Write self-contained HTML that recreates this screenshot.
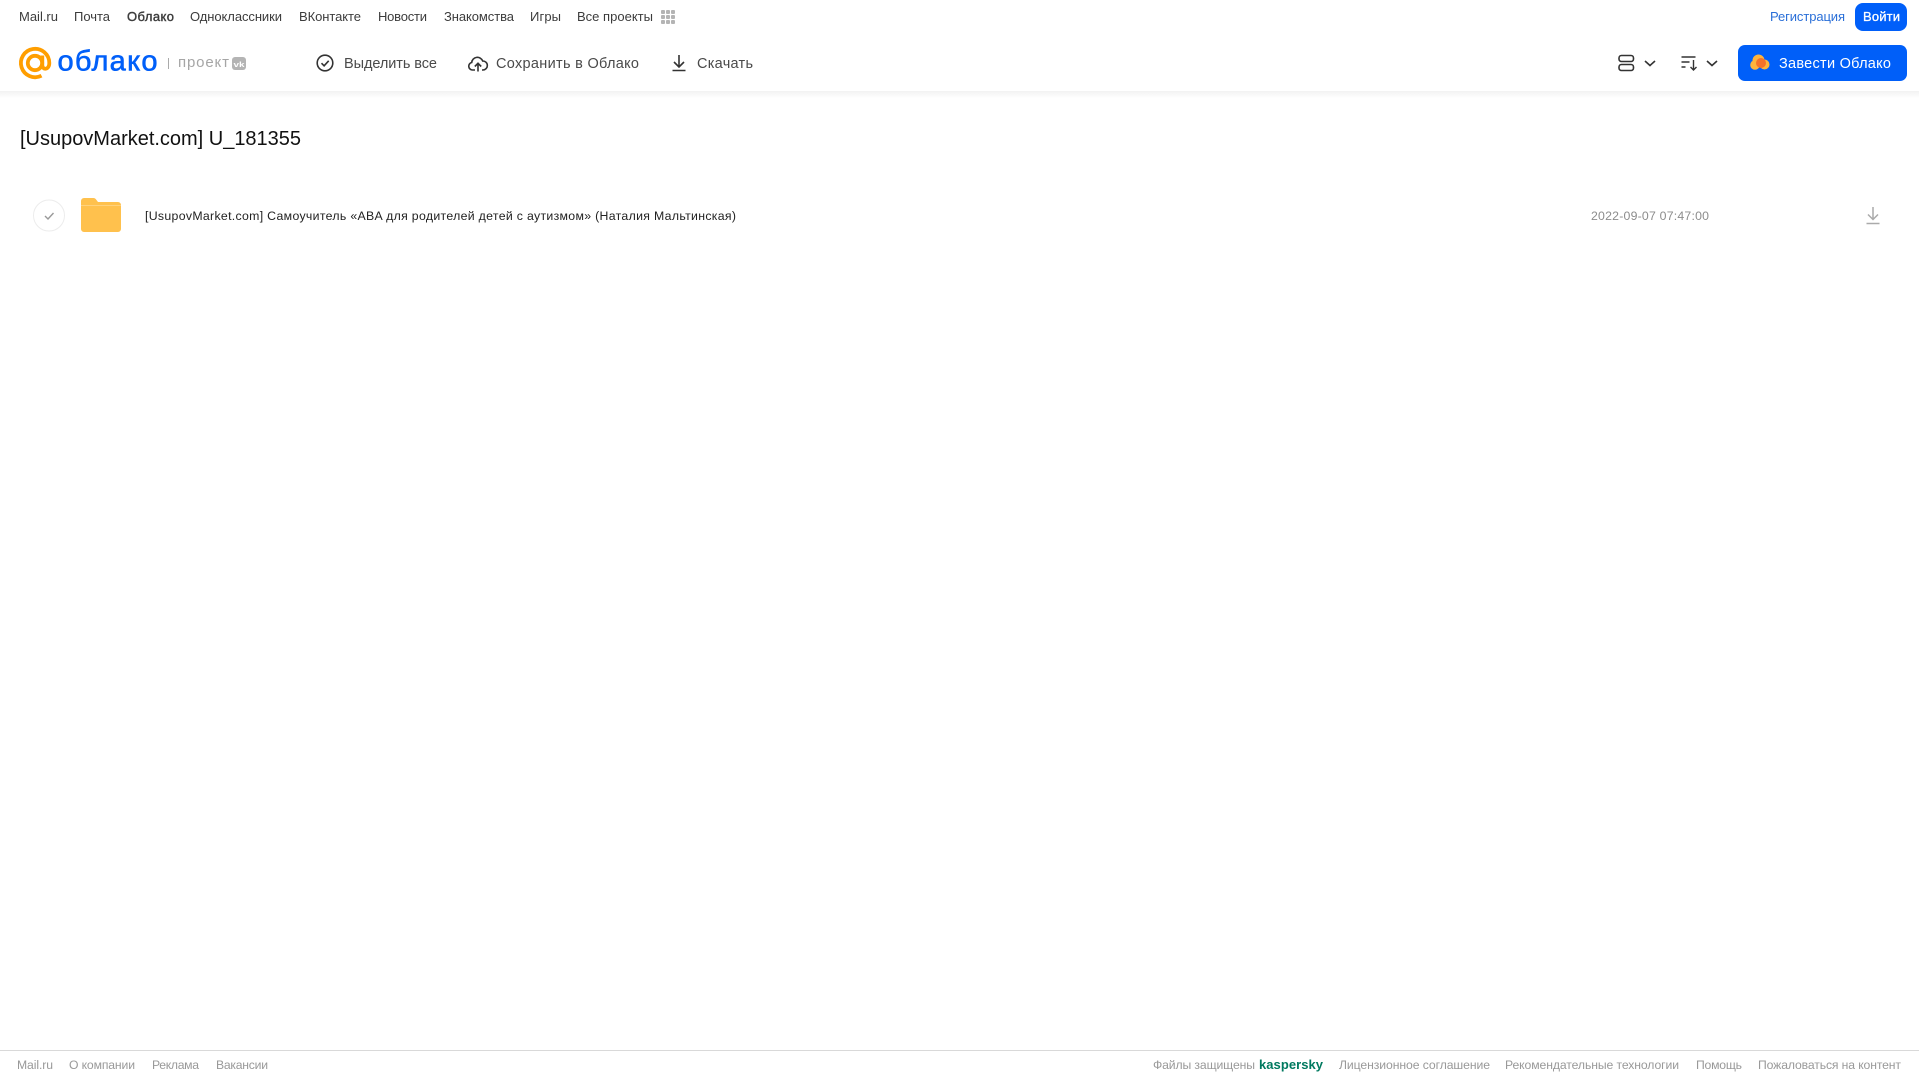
<!DOCTYPE html>
<html lang="ru"><head><meta charset="utf-8"><title>Облако</title>
<style>
html,body{margin:0;padding:0;width:1919px;height:1079px;overflow:hidden;background:#fff}
svg{position:absolute;left:0;top:0;display:block}
text{font-family:"Liberation Sans",sans-serif}
.h{font-size:13px;fill:#3c3c3c}
.t{font-size:14.5px;fill:#4a4a4a}
.f{font-size:12.2px;fill:#999}
</style></head><body>
<svg width="1919" height="1079" viewBox="0 0 1919 1079" xmlns="http://www.w3.org/2000/svg">
<defs><linearGradient id="sh" x1="0" y1="0" x2="0" y2="1"><stop offset="0" stop-color="#f2f2f2"/><stop offset="1" stop-color="#fff"/></linearGradient></defs>
<rect x="0" y="91" width="1919" height="7" fill="url(#sh)"/>

<text class="h" x="19" y="21" textLength="39" lengthAdjust="spacing">Mail.ru</text>
<text class="h" x="74" y="21" textLength="36" lengthAdjust="spacing">Почта</text>
<text class="h" x="127" y="21" textLength="47" lengthAdjust="spacing" stroke="#3c3c3c" stroke-width=".4">Облако</text>
<text class="h" x="190" y="21" textLength="92" lengthAdjust="spacing">Одноклассники</text>
<text class="h" x="299" y="21" textLength="62" lengthAdjust="spacing">ВКонтакте</text>
<text class="h" x="378" y="21" textLength="49" lengthAdjust="spacing">Новости</text>
<text class="h" x="444" y="21" textLength="70" lengthAdjust="spacing">Знакомства</text>
<text class="h" x="530" y="21" textLength="31" lengthAdjust="spacing">Игры</text>
<text class="h" x="577" y="21" textLength="76" lengthAdjust="spacing">Все проекты</text>
<g fill="#b4b4b4"><rect x="661" y="10" width="4" height="4" rx="1"/><rect x="666" y="10" width="4" height="4" rx="1"/><rect x="671" y="10" width="4" height="4" rx="1"/><rect x="661" y="15" width="4" height="4" rx="1"/><rect x="666" y="15" width="4" height="4" rx="1"/><rect x="671" y="15" width="4" height="4" rx="1"/><rect x="661" y="20" width="4" height="4" rx="1"/><rect x="666" y="20" width="4" height="4" rx="1"/><rect x="671" y="20" width="4" height="4" rx="1"/></g>

<g fill="none" stroke="#ff9e00" stroke-width="3.8"><circle cx="35" cy="63" r="7.2"/><path d="M42.300 55.500V65c0 5.500 7 5 7-2A14.200 14.200 0 1 0 41.500 75.700"/></g>
<text x="57.500" y="70.500" font-size="29" fill="#005ff9" stroke="#005ff9" stroke-width=".6" textLength="100" lengthAdjust="spacing">облако</text>
<rect x="168" y="58" width="1" height="11" fill="#aaa"/>
<text x="178" y="67" font-size="15" fill="#a6a6a6" textLength="51" lengthAdjust="spacing">проект</text>
<rect x="232" y="57" width="14" height="13" rx="3" fill="#b4b4b4"/>
<text x="233.500" y="67" font-size="7.500" font-weight="700" fill="#fff" textLength="11" lengthAdjust="spacingAndGlyphs">vk</text>

<g fill="none" stroke="#333" stroke-width="1.600"><circle cx="325" cy="63" r="7.800"/><path d="M321.500 63.200l2.600 2.600 4.600-5"/></g>
<text class="t" x="344" y="68" textLength="93" lengthAdjust="spacing">Выделить все</text>
<g fill="none" stroke="#333" stroke-width="1.600"><path d="M475 70h-2.500a3.800 3.800 0 0 1-.8-7.500 5.700 5.700 0 0 1 11-1.500A4.500 4.500 0 0 1 483 70h-1"/><path d="M478 71.500v-8M474.800 66.500l3.200-3.200 3.200 3.200"/></g>
<text class="t" x="496" y="68" textLength="143" lengthAdjust="spacing">Сохранить в Облако</text>
<g fill="none" stroke="#333" stroke-width="1.600"><path d="M679 55v11.500M674 62l5 5 5-5M672.500 70.500h13"/></g>
<text class="t" x="697" y="68" textLength="56" lengthAdjust="spacing">Скачать</text>

<text x="1770" y="21" font-size="13" fill="#2a6fd8" textLength="75" lengthAdjust="spacing">Регистрация</text>
<rect x="1855" y="3" width="52" height="28" rx="8" fill="#005ff9"/>
<text x="1863" y="21" font-size="13" fill="#fff" stroke="#fff" stroke-width=".3" textLength="37" lengthAdjust="spacing">Войти</text>

<g fill="none" stroke="#333" stroke-width="1.600"><rect x="1619" y="55.500" width="14.500" height="6" rx="2.500"/><rect x="1619" y="64.500" width="14.500" height="6" rx="2.500"/><path d="M1645 61l5 4.500 5-4.500M1707 61l5 4.500 5-4.500"/></g>
<g fill="none" stroke="#333" stroke-width="1.400"><path d="M1681.500 57h14M1681.500 62h8M1681.500 67h4M1693.500 60v10M1690.500 67l3 3 3-3"/></g>

<rect x="1738" y="45" width="169" height="36" rx="7" fill="#005ff9"/>
<circle cx="1758.500" cy="60.500" r="6" fill="#ffb43c"/>
<circle cx="1755" cy="65" r="4.800" fill="#ffb43c"/>
<circle cx="1764.500" cy="64.500" r="5" fill="#ffb43c"/>
<circle cx="1761" cy="63" r="5" fill="#f4722b"/>
<text x="1779" y="68" font-size="14.500" fill="#fff" textLength="112" lengthAdjust="spacing">Завести Облако</text>

<text x="20" y="145" font-size="20" fill="#111" textLength="281" lengthAdjust="spacing">[UsupovMarket.com] U_181355</text>

<circle cx="49" cy="215.500" r="15.500" fill="#fff" stroke="#ececec"/>
<path d="M45 216l3 3 5.500-6" fill="none" stroke="#999" stroke-width="1.400"/>
<path d="M81 201a3 3 0 0 1 3-3h9.500a3 3 0 0 1 2.200 1l2.300 3h20a3 3 0 0 1 3 3v24a3 3 0 0 1-3 3H84a3 3 0 0 1-3-3z" fill="#ffc14d"/>
<rect x="81" y="205" width="40" height="1" fill="#ffd27d"/>
<text x="145" y="220" font-size="12.300" fill="#222" textLength="591" lengthAdjust="spacing">[UsupovMarket.com] Самоучитель «ABA для родителей детей с аутизмом» (Наталия Мальтинская)</text>
<text x="1591" y="220" font-size="12.300" fill="#8c8c8c" textLength="118" lengthAdjust="spacing">2022-09-07 07:47:00</text>
<path d="M1873 207v12M1868 214.500l5 5 5-5M1866.500 223.500h13" fill="none" stroke="#aaa" stroke-width="1.500"/>

<rect x="0" y="1050" width="1919" height="1" fill="#d9d9d9"/>
<text class="f" x="17" y="1069" textLength="36" lengthAdjust="spacing">Mail.ru</text>
<text class="f" x="69" y="1069" textLength="66" lengthAdjust="spacing">О компании</text>
<text class="f" x="152" y="1069" textLength="47" lengthAdjust="spacing">Реклама</text>
<text class="f" x="216" y="1069" textLength="52" lengthAdjust="spacing">Вакансии</text>
<text class="f" x="1153" y="1069" textLength="102" lengthAdjust="spacing">Файлы защищены</text>
<text x="1259" y="1069" font-size="13" font-weight="700" fill="#00795f" textLength="64" lengthAdjust="spacing">kaspersky</text>
<text class="f" x="1339" y="1069" textLength="151" lengthAdjust="spacing">Лицензионное соглашение</text>
<text class="f" x="1505" y="1069" textLength="174" lengthAdjust="spacing">Рекомендательные технологии</text>
<text class="f" x="1696" y="1069" textLength="46" lengthAdjust="spacing">Помощь</text>
<text class="f" x="1758" y="1069" textLength="143" lengthAdjust="spacing">Пожаловаться на контент</text>
</svg>
</body></html>
